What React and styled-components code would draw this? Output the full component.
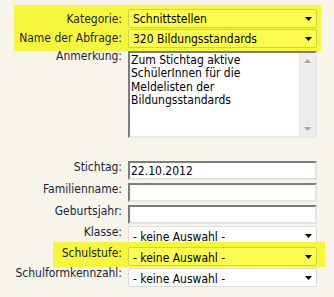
import React from "react";
import styled, { createGlobalStyle } from "styled-components";

const Global = createGlobalStyle`
  html, body { margin: 0; padding: 0; background: #f7f4e9; }
  body {
    font-family: "DejaVu Sans Condensed", "DejaVu Sans", sans-serif;
    font-stretch: condensed;
    font-size: 12px;
  }
`;

const Page = styled.form`
  display: flex;
  flex-direction: column;
  padding-top: 5px;
  width: 334px;
  height: 297px;
  box-sizing: border-box;
  margin: 0;
`;

const Highlight = styled.div`
  position: relative;
  display: flex;
  flex-direction: column;
  gap: 1px;
  background: #f6f63e;
  margin-left: ${(p) => p.$left}px;
  margin-top: ${(p) => p.$mt || 0}px;
  width: ${(p) => p.$width}px;
  padding: ${(p) => p.$pad};
  box-sizing: border-box;
`;

const Row = styled.div`
  display: grid;
  grid-template-columns: ${(p) => p.$labelWidth ?? 122}px 189px;
  column-gap: 6px;
  align-items: start;
  margin-top: ${(p) => p.$mt || 0}px;
`;

const Label = styled.label`
  display: flex;
  justify-content: flex-end;
  white-space: nowrap;
  color: #1e1e3c;
  line-height: 15px;
  margin-top: ${(p) => p.$shift || 0}px;
`;

const SelectWrap = styled.div`
  position: relative;
  height: 19px;
`;

const Select = styled.select`
  appearance: none;
  -webkit-appearance: none;
  display: block;
  width: 100%;
  height: 19px;
  box-sizing: border-box;
  margin: 0;
  border: 1px solid ${(p) => (p.$hl ? "#d2d24a" : "#dcdcdc")};
  border-radius: 2px;
  background: ${(p) => (p.$hl ? "#fcfc50" : "#ffffff")};
  font: inherit;
  color: #000;
  padding: ${(p) => (p.$low ? "3px 14px 0 4px" : "0 14px 0 4px")};
  outline: none;
`;

const Caret = styled.svg`
  position: absolute;
  right: 5px;
  top: 8px;
  width: 7px;
  height: 4px;
  pointer-events: none;
`;

const TextInput = styled.input`
  display: block;
  width: 100%;
  height: 19px;
  box-sizing: border-box;
  margin: 0;
  border: 2px solid;
  border-color: #7c7c7c #e4e4e4 #e4e4e4 #7c7c7c;
  background: #fff;
  font: inherit;
  color: #000;
  padding: 0 1px;
  outline: none;
`;

const NoteBox = styled.div`
  display: flex;
  height: 87px;
  box-sizing: border-box;
  border: 2px solid;
  border-color: #7c7c7c #e8e8e8 #e8e8e8 #7c7c7c;
  background: #fff;
`;

const NoteText = styled.textarea`
  flex: 1;
  min-width: 0;
  border: none;
  resize: none;
  overflow: hidden;
  font: inherit;
  line-height: 13.3px;
  padding: 1px;
  margin: 0;
  color: #000;
  background: transparent;
  outline: none;
`;

const ScrollTrack = styled.div`
  width: 16px;
  background: #ededed;
  display: flex;
  flex-direction: column;
  justify-content: space-between;
  align-items: center;
  padding: 6px 0 5px;
  box-sizing: border-box;
`;

const ScrollArrow = styled.svg`
  width: 7px;
  height: 4px;
  display: block;
`;

const Dropdown = ({ value, hl, low }) => (
  <SelectWrap>
    <Select $hl={hl} $low={low} defaultValue={value}>
      <option>{value}</option>
    </Select>
    <Caret viewBox="0 0 7 4">
      <polygon points="0,0 7,0 3.5,4" fill="#000" />
    </Caret>
  </SelectWrap>
);

export default function App() {
  return (
    <>
      <Global />
      <Page>
        <Highlight $left={14} $width={307} $pad="4px 4px 3px 0">
          <Row $labelWidth={108}>
            <Label $shift={3}>Kategorie:</Label>
            <Dropdown value="Schnittstellen" hl />
          </Row>
          <Row $labelWidth={108}>
            <Label $shift={2}>Name der Abfrage:</Label>
            <Dropdown value="320 Bildungsstandards" hl />
          </Row>
        </Highlight>

        <Row>
          <Label $shift={-2}>Anmerkung:</Label>
          <NoteBox>
            <NoteText
              readOnly
              defaultValue={"Zum Stichtag aktive\nSchülerInnen für die\nMeldelisten der\nBildungsstandards"}
            />
            <ScrollTrack>
              <ScrollArrow viewBox="0 0 7 4">
                <polygon points="0,4 7,4 3.5,0" fill="#a6a6a6" />
              </ScrollArrow>
              <ScrollArrow viewBox="0 0 7 4">
                <polygon points="0,0 7,0 3.5,4" fill="#a6a6a6" />
              </ScrollArrow>
            </ScrollTrack>
          </NoteBox>
        </Row>

        <Row $mt={23}>
          <Label $shift={-1}>Stichtag:</Label>
          <TextInput defaultValue="22.10.2012" />
        </Row>
        <Row $mt={3}>
          <Label $shift={-1}>Familienname:</Label>
          <TextInput />
        </Row>
        <Row $mt={3}>
          <Label $shift={-1}>Geburtsjahr:</Label>
          <TextInput />
        </Row>
        <Row $mt={2}>
          <Label $shift={-1}>Klasse:</Label>
          <Dropdown value="- keine Auswahl -" low />
        </Row>

        <Highlight $left={53} $width={272} $mt={-3} $pad="5px 8px 1px 0">
          <Row $labelWidth={69}>
            <Label $shift={-1}>Schulstufe:</Label>
            <Dropdown value="- keine Auswahl -" hl low />
          </Row>
        </Highlight>

        <Row $mt={1}>
          <Label $shift={-2}>Schulformkennzahl:</Label>
          <Dropdown value="- keine Auswahl -" low />
        </Row>
      </Page>
    </>
  );
}
